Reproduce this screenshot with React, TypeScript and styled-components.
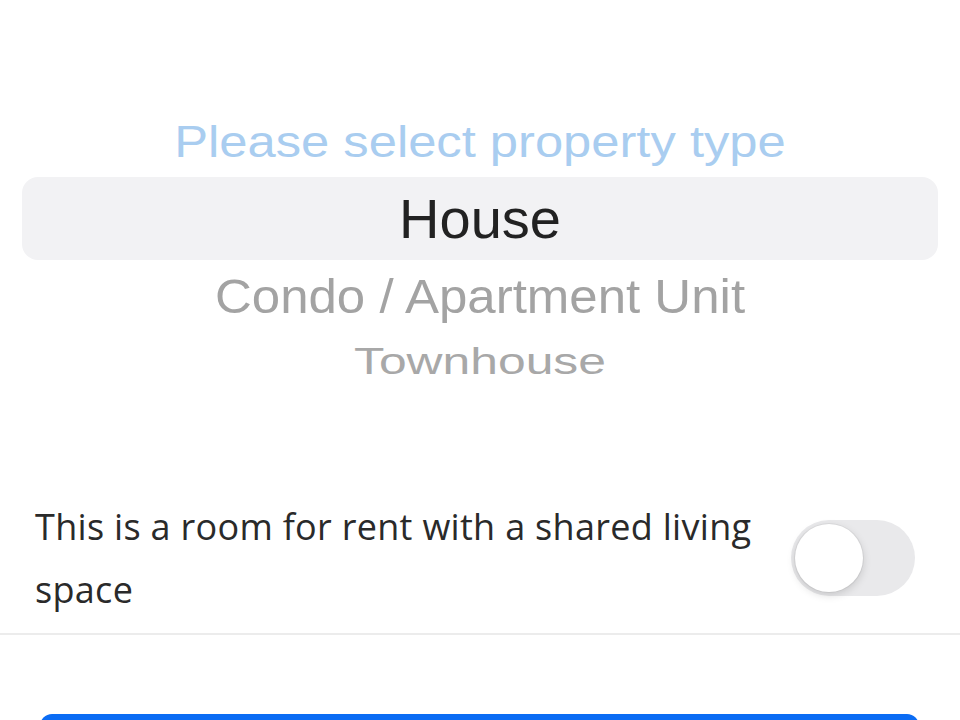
import { useState } from "react";
import styled, { createGlobalStyle } from "styled-components";

const GlobalStyle = createGlobalStyle`
	html, body {
		margin: 0;
		padding: 0;
		background: #ffffff;
		overflow: hidden;
	}
	* { box-sizing: border-box; }
`;

const Page = styled.div`
	width: 960px;
	height: 720px;
	display: flex;
	flex-direction: column;
	background: #ffffff;
	overflow: hidden;
`;

const Picker = styled.div`
	display: flex;
	flex-direction: column;
	padding-top: 107px;
`;

const Row = styled.div<{ $h: number }>`
	height: ${(p) => p.$h}px;
	display: flex;
	justify-content: center;
	align-items: center;
	font-family: "Liberation Sans", Arial, sans-serif;
`;

const Selected = styled(Row)`
	margin: 0 22px;
	border-radius: 16px;
	background: #f2f2f4;
`;

const Label = styled.span<{ $size: number; $color: string; $squash?: number }>`
	display: inline-block;
	font-size: ${(p) => p.$size}px;
	color: ${(p) => p.$color};
	line-height: 1;
	white-space: nowrap;
	transform: scaleY(${(p) => p.$squash ?? 1});
`;

const OptionRow = styled.div`
	margin-top: 103px;
	display: flex;
	align-items: center;
	padding: 0 45px 12px 35px;
	border-bottom: 2px solid #ececec;
`;

const OptionText = styled.p`
	flex: 1;
	margin: 0;
	padding-right: 20px;
	font-family: "Open Sans", sans-serif;
	font-size: 36px;
	letter-spacing: 0.3px;
	line-height: 63px;
	color: #2a2a2a;
`;

const Track = styled.button<{ $on: boolean }>`
	width: 124px;
	height: 76px;
	padding: 4px;
	border: none;
	border-radius: 38px;
	background: ${(p) => (p.$on ? "#34c759" : "#e9e9eb")};
	display: flex;
	justify-content: ${(p) => (p.$on ? "flex-end" : "flex-start")};
	align-items: center;
	cursor: pointer;
	flex-shrink: 0;
`;

const Knob = styled.span`
	width: 68px;
	height: 68px;
	border-radius: 50%;
	background: #ffffff;
	box-shadow: 0 3px 8px rgba(0, 0, 0, 0.15), 0 0 0 1px rgba(0, 0, 0, 0.05);
`;

const PrimaryButton = styled.button`
	margin: 79px 41px 0 40px;
	height: 60px;
	flex-shrink: 0;
	border: none;
	border-radius: 12px;
	background: #0b6cf4;
	color: #ffffff;
	font-family: "Liberation Sans", Arial, sans-serif;
	font-size: 32px;
`;

function App()
{
	const [shared, setShared] = useState(false);

	return (<>
		<GlobalStyle />
		<Page>
			<Picker>
				<Row $h={70}><Label $size={50.7} $color="#a9cdf0" $squash={0.88}>Please select property type</Label></Row>
				<Selected $h={83}><Label $size={56} $color="#222222">House</Label></Selected>
				<Row $h={72}><Label $size={51} $color="#a3a3a3" $squash={0.95}>Condo / Apartment Unit</Label></Row>
				<Row $h={60}><Label $size={49.8} $color="#a8a8a8" $squash={0.76}>Townhouse</Label></Row>
			</Picker>
			<OptionRow>
				<OptionText>This is a room for rent with a shared living space</OptionText>
				<Track $on={shared} onClick={() => setShared(!shared)}><Knob /></Track>
			</OptionRow>
			<PrimaryButton />
		</Page>
	</>);
}

export default App;
